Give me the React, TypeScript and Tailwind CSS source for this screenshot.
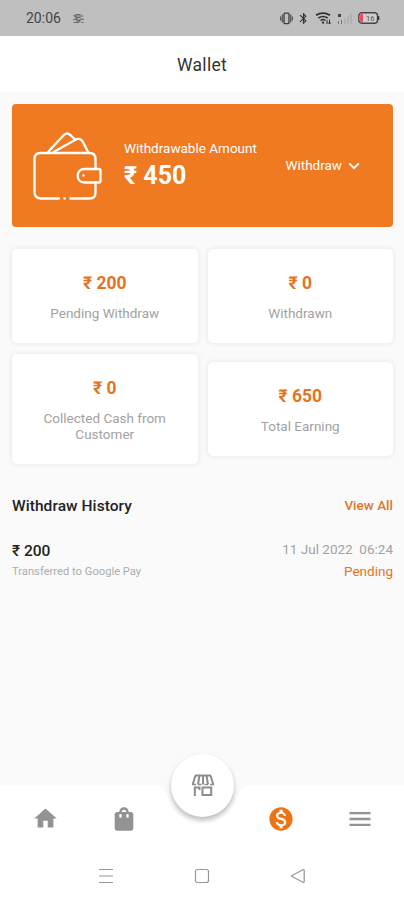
import React from "react";
import { MdHome, MdShoppingBag, MdMonetizationOn, MdMenu, MdBluetooth } from "react-icons/md";

function StatusBar() {
  return (
    <header className="flex h-9 shrink-0 items-center justify-between bg-[#bfbfbf] pr-[24px] pl-[26px] text-[#454545]">
      <div className="flex items-center gap-[11px]">
        <span className="text-[14px] leading-[18px]">20:06</span>
        <svg width="13" height="11" viewBox="0 0 13 11" fill="none" stroke="#6a6a6a" strokeWidth="1.2">
          <path d="M1.500 2l2 2M4 1.500h4v3H4zM5 3h2M9 3h2.500M1 7l3-1 2 1.500 3-1.500 3 .5M1.500 9.500h5l2-2M9.500 9.500h2M5 5v4" />
        </svg>
      </div>
      <div className="flex items-center">
        <svg width="13" height="13" viewBox="0 0 13 13" fill="none" stroke="#3c3c3c" strokeWidth="1.3">
          <rect x="4" y="1.200" width="5" height="10.500" rx="1" />
          <path d="M2.200 2.500v8M.7 4.500v4M10.800 2.500v8M12.300 4.500v4" strokeWidth="1" />
        </svg>
        <MdBluetooth className="ml-[4px] text-[#303030]" size={13} />
        <svg className="ml-[5px]" width="17" height="13" viewBox="0 0 17 13" fill="none" stroke="#303030">
          <path d="M1 3.300Q8 -.9 15 3.300" strokeWidth="1.800" />
          <path d="M3.300 6Q8 3 12.700 6M5.500 8.500Q8 6.700 10.500 8.500" strokeWidth="1.500" />
          <path d="M7 10h2l-1 1.700zM12 8v4M14.500 7.500v4M13.200 10.500l1.300 1.500 1.300-1.500" strokeWidth="1" />
        </svg>
        <svg className="ml-[5px]" width="16" height="13" viewBox="0 0 16 13" fill="none">
          <path d="M1 2h3v3H1z" fill="#444" />
          <path d="M1.500 9v3M4.500 8v4" stroke="#777" />
          <path d="M8 7v5M11 4v8M14 1v11" stroke="#a8a8a8" strokeWidth="1.200" />
        </svg>
        <svg className="ml-[5px]" width="22" height="12" viewBox="0 0 22 12">
          <rect x=".8" y=".8" width="18.700" height="10.400" rx="3" fill="#cecece" stroke="#444" strokeWidth="1.400" />
          <path d="M3.500 2H5v8H3.500Q2 10 2 8.500v-5Q2 2 3.500 2" fill="#f14a5d" />
          <path d="M20.500 4v4" stroke="#333" strokeWidth="1.600" />
          <text x="8" y="8.700" fontSize="7.500" fill="#555" fontFamily="Roboto, sans-serif">16</text>
        </svg>
      </div>
    </header>
  );
}

function WalletIcon() {
  return (
    <svg width="70" height="70" viewBox="0 0 70 70" fill="none" stroke="white" strokeWidth="2.300" strokeLinecap="round" strokeLinejoin="round">
      <path d="M26 67.500H7.500Q1.500 67 1.500 61V28Q1.500 22 7.500 22H56.500Q62.500 22 62.500 28V38" />
      <path d="M62.500 51.500V61.500Q62.500 67.500 56.500 67.500H37.500M31.500 67.500h.3" />
      <path d="M15 21L29.500 5.500Q33.300 .2 37.500 4.200L41.500 8" />
      <path d="M20.500 21L43.500 8.200Q47.800 6.700 50 11L55 21" />
      <path d="M67.500 39.500V50Q67.500 51.500 66 51.500H51.500C42.500 51.500 42.500 38 51.500 38H66Q67.500 38 67.500 39.500" />
      <circle cx="50.500" cy="44.500" r=".6" strokeWidth="1.200" />
    </svg>
  );
}

function BalanceCard() {
  return (
    <section className="flex h-[123px] items-center rounded-[4px] bg-[#ef7a22] pr-[33px] pl-[21px] text-white">
      <WalletIcon />
      <div className="mt-[1px] ml-[21px] flex-1">
        <p className="text-[13.500px] leading-[18px] whitespace-nowrap">Withdrawable Amount</p>
        <p className="mt-[2px] text-[25px] leading-[34px] font-bold">₹ 450</p>
      </div>
      <button className="flex items-center gap-[6px] text-[13.500px]">
        Withdraw
        <svg width="12" height="8" viewBox="0 0 12 8" fill="none" stroke="white" strokeWidth="2">
          <path d="M1.200 1.400L6 6.200l4.800-4.800" />
        </svg>
      </button>
    </section>
  );
}

function Stat({ amount, label }: { amount: string; label: string }) {
  return (
    <div className="rounded-[5px] bg-white px-5 pt-[22px] pb-[22px] text-center shadow-[0_0_5px_1px_rgba(0,0,0,0.065)]">
      <p className="text-[17.500px] leading-[24px] font-bold text-[#e4741f]">{amount}</p>
      <p className="mt-[10px] text-[13.500px] leading-[16px] text-[#a2a2a2]">{label}</p>
    </div>
  );
}

function StoreIcon() {
  return (
    <svg width="24" height="23" viewBox="0 0 24 23" fill="none" stroke="#8d8d8d" strokeWidth="2">
      <path d="M4 1.500h16M4.500 1.500l-2.800 9M8.500 1.500l-1.500 9M12 1.500v9M15.500 1.500l1.500 9M19.500 1.500l2.800 9" />
      <path d="M1 10.500h4M7 10.500h3.500M13.500 10.500H17M19 10.500h4" strokeWidth="1.600" />
      <path d="M3.800 12.500v9.500M3.800 13.500h4.700V16M11.500 13.500h8.700v7.500h-8.700z" />
    </svg>
  );
}

function BottomBar() {
  return (
    <nav className="relative h-[115px] shrink-0">
      <svg className="absolute inset-0" width="404" height="115" viewBox="0 0 404 115">
        <path d="M0 0H154C163 0 165 4 168 12C174 29 187 38 202.500 38S231 29 237 12C240 4 242 0 251 0H404V115H0Z" fill="#fff" />
      </svg>
      <button className="absolute top-[-31px] left-[171px] flex h-[63px] w-[63px] items-center justify-center rounded-full bg-white shadow-[0_3px_5px_rgba(0,0,0,0.26)]">
        <StoreIcon />
      </button>
      <div className="relative grid h-[67px] grid-cols-5 place-items-center pr-[5px] pl-[6px] text-[#939393]">
        <MdHome size={27} />
        <MdShoppingBag size={28} />
        <MdMonetizationOn className="col-start-4 text-[#ed7414]" size={28} />
        <MdMenu size={28} />
      </div>
      <div className="relative flex h-[48px] items-center justify-between px-[97px] text-[#979797]">
        <svg width="18" height="16" viewBox="0 0 18 16" stroke="currentColor" strokeWidth="1.200">
          <path d="M2 1.500h14M2 8h14M2 14.500h14" />
        </svg>
        <svg width="16" height="16" viewBox="0 0 16 16" fill="none" stroke="currentColor" strokeWidth="1.200">
          <rect x="1.500" y="1.500" width="13" height="13" rx="2" />
        </svg>
        <svg width="18" height="16" viewBox="0 0 18 16" fill="none" stroke="currentColor" strokeWidth="1.200" strokeLinejoin="round">
          <path d="M14 1.800L3 7.500q-1 .5 0 1L14 14.200q1.200.5 1.200-.7v-11q0-1.200-1.200-.7z" />
        </svg>
      </div>
    </nav>
  );
}

export default function App() {
  return (
    <div className="flex h-[900px] w-[404px] flex-col overflow-hidden bg-[#fafafa] font-['Roboto',sans-serif]">
      <StatusBar />
      <div className="flex h-[56px] shrink-0 items-center justify-center bg-white pt-[2px] text-[17.500px] tracking-[0.25px] text-[#333]">
        <h1>Wallet</h1>
      </div>
      <main className="flex-1 pt-[12px] pr-[11px] pl-[12px]">
        <BalanceCard />
        <div className="mt-[22px] grid grid-cols-2 items-center gap-x-[10px] gap-y-[11px]">
          <Stat amount="₹ 200" label="Pending Withdraw" />
          <Stat amount="₹ 0" label="Withdrawn" />
          <Stat amount="₹ 0" label="Collected Cash from Customer" />
          <Stat amount="₹ 650" label="Total Earning" />
        </div>
        <div className="mt-[31px] flex items-center justify-between">
          <h2 className="text-[15.500px] leading-[22px] font-medium tracking-[0.06px] text-[#222]">Withdraw History</h2>
          <button className="-mt-[2px] text-[13.500px] font-medium text-[#e4741f]">View All</button>
        </div>
        <div className="mt-[24px] flex justify-between">
          <div>
            <p className="text-[15.500px] leading-[20px] font-medium text-[#222]">₹ 200</p>
            <p className="mt-[3px] text-[11.200px] leading-[16px] text-[#adadad]">Transferred to Google Pay</p>
          </div>
          <div className="-mt-px text-right text-[13.500px]">
            <p className="leading-[18px] whitespace-pre text-[#a2a2a2]">{"11 Jul 2022  06:24"}</p>
            <p className="mt-[4px] leading-[18px] text-[#e4741f]">Pending</p>
          </div>
        </div>
      </main>
      <BottomBar />
    </div>
  );
}
